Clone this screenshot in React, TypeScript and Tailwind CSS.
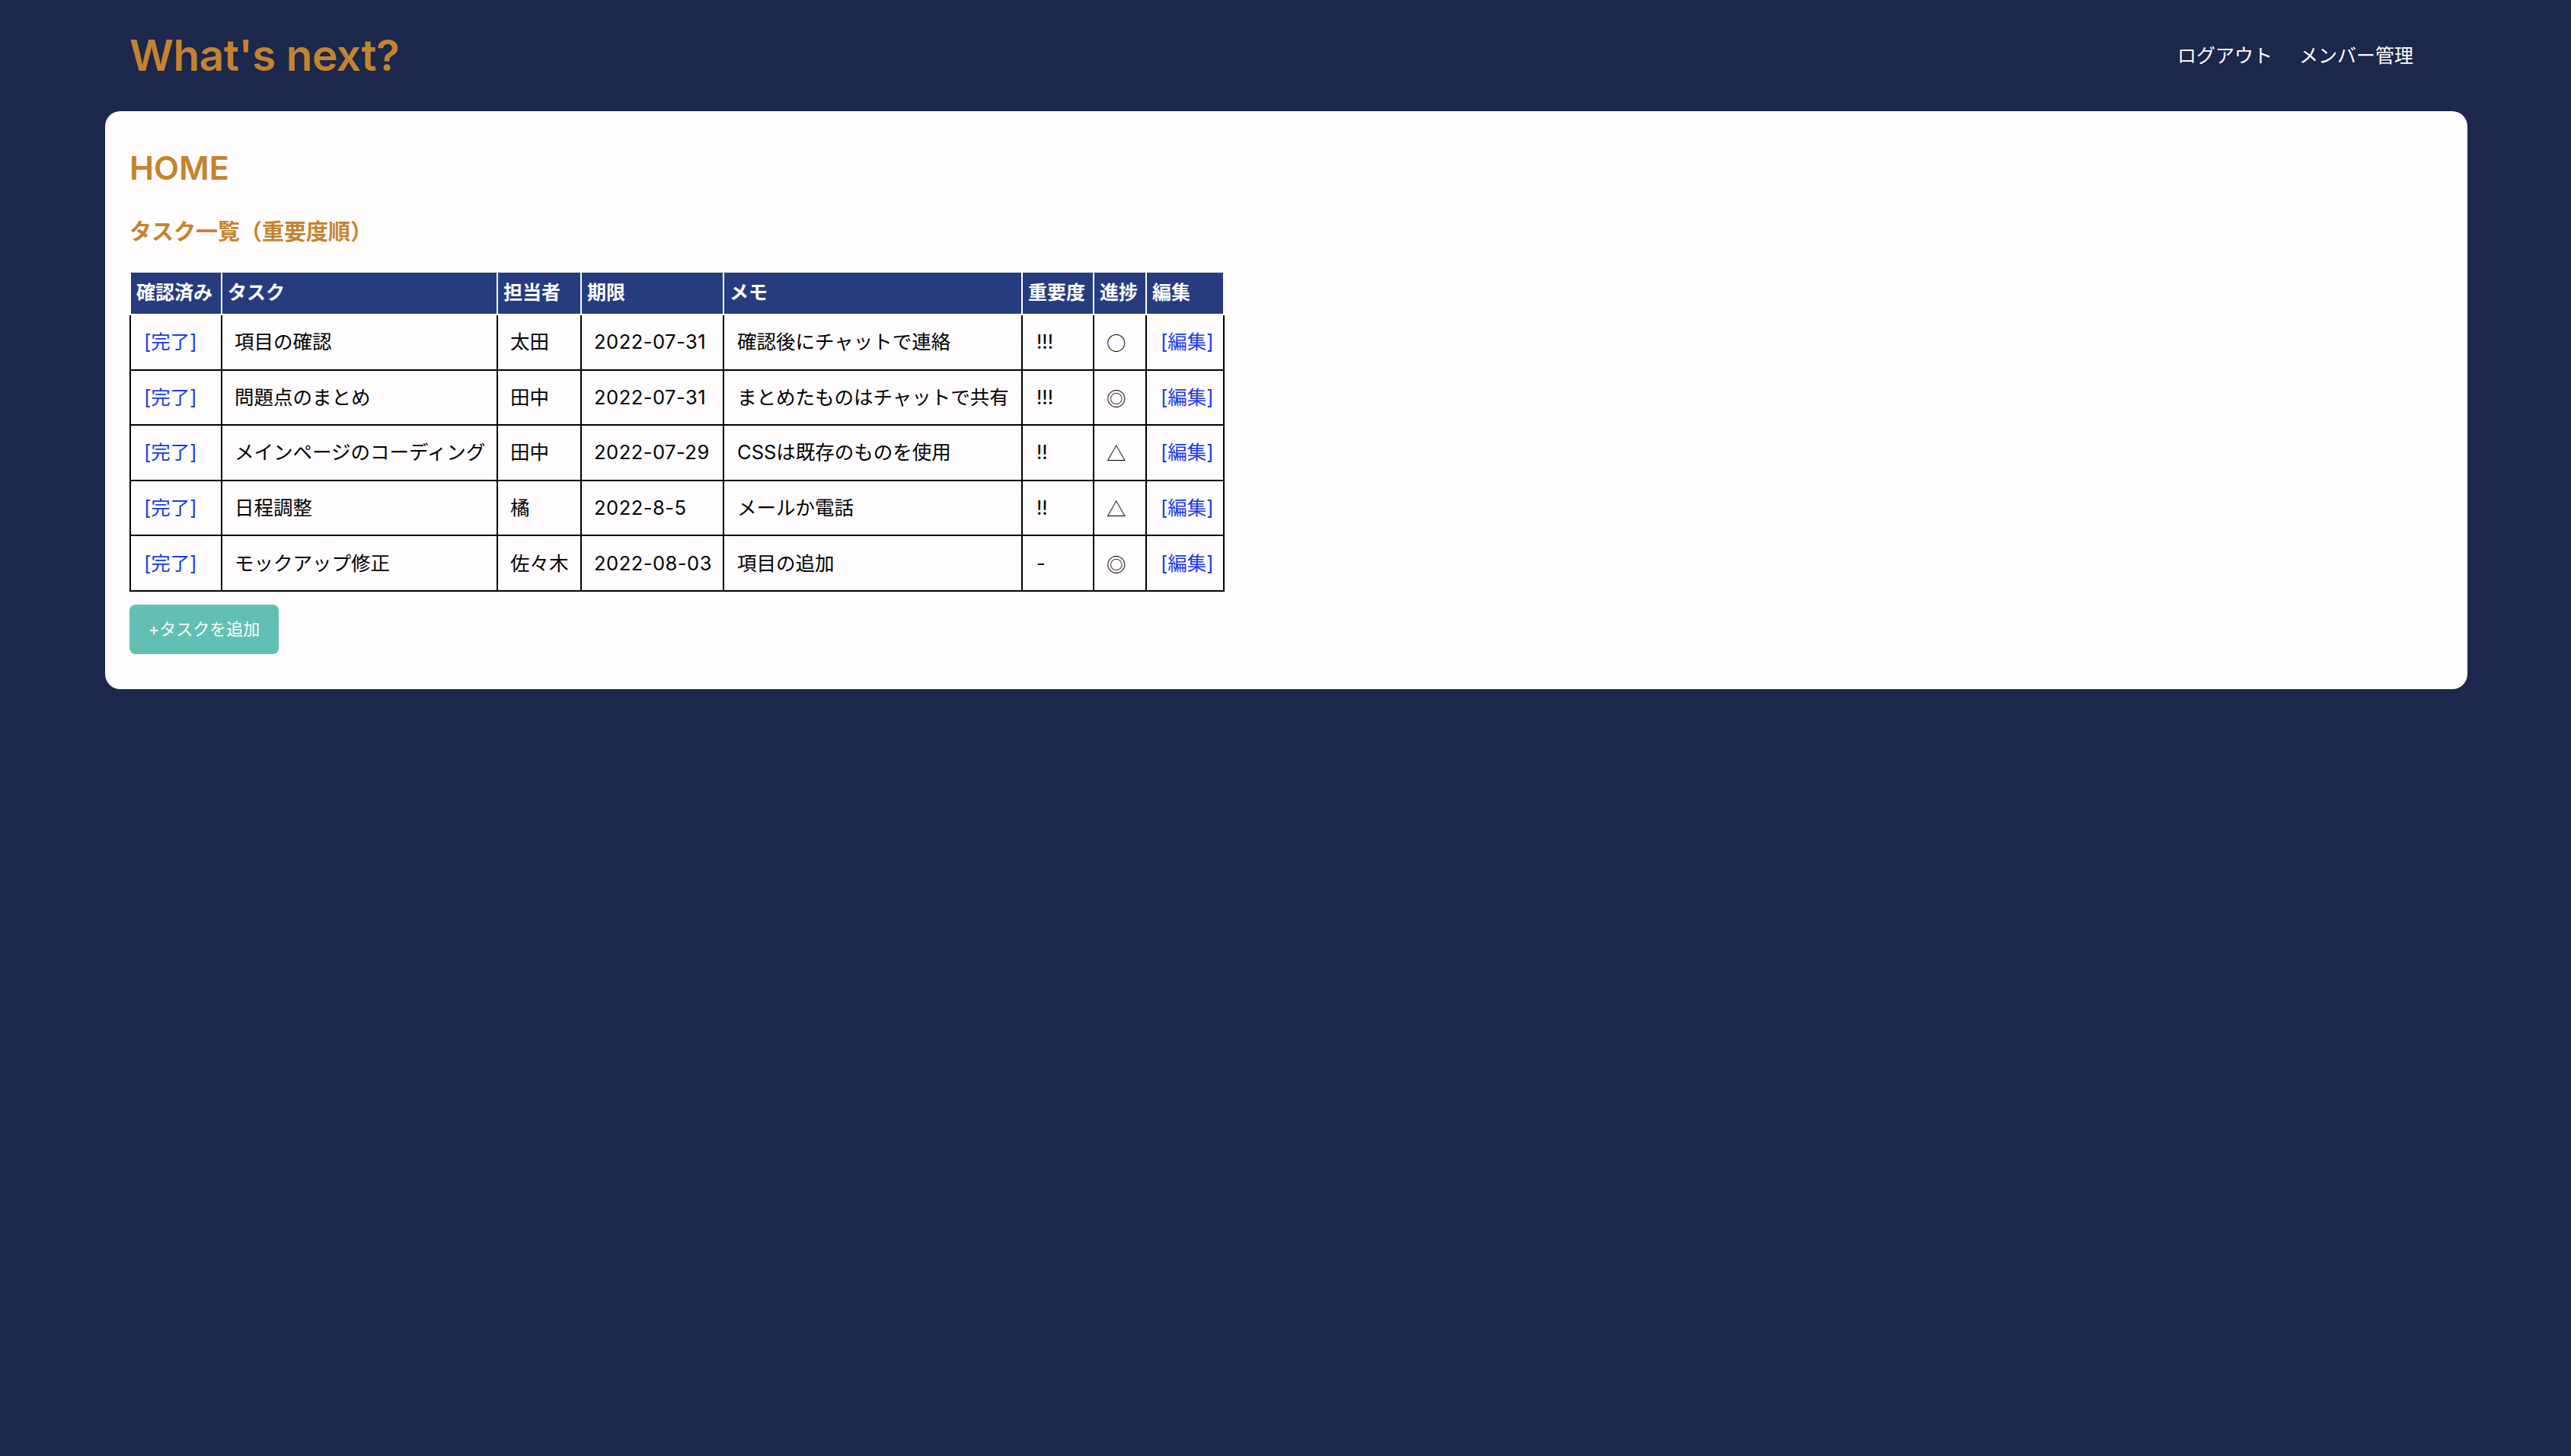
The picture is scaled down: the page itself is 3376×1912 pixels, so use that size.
import React from "react";

interface Task {
  id: number;
  title: string;
  owner: string;
  due: string;
  memo: string;
  priority: string;
  progress: string;
}

const tasks: Task[] = [
  { id: 1, title: "項目の確認", owner: "太田", due: "2022-07-31", memo: "確認後にチャットで連絡", priority: "!!!", progress: "○" },
  { id: 2, title: "問題点のまとめ", owner: "田中", due: "2022-07-31", memo: "まとめたものはチャットで共有", priority: "!!!", progress: "◎" },
  { id: 3, title: "メインページのコーディング", owner: "田中", due: "2022-07-29", memo: "CSSは既存のものを使用", priority: "!!", progress: "△" },
  { id: 4, title: "日程調整", owner: "橘", due: "2022-8-5", memo: "メールか電話", priority: "!!", progress: "△" },
  { id: 5, title: "モックアップ修正", owner: "佐々木", due: "2022-08-03", memo: "項目の追加", priority: "-", progress: "◎" },
];

const headers = ["確認済み", "タスク", "担当者", "期限", "メモ", "重要度", "進捗", "編集"];

export default function App() {
  return (
    <div className="min-h-screen bg-[#1b274b] font-[Inter,'Noto_Sans_CJK_JP',sans-serif]">
      {/* Header */}
      <header className="h-[146px] flex items-center justify-between pl-[170px] pr-[207px]">
        <h1 className="text-[57px] font-semibold text-[#c4832f] leading-none tracking-[-0.6px] -mt-[2px]">
          What's next?
        </h1>
        <nav className="flex items-center gap-[35px] text-[25px] text-white font-['Noto_Sans_CJK_JP',sans-serif] -mt-[2px]">
          <a href="#">ログアウト</a>
          <a href="#">メンバー管理</a>
        </nav>
      </header>

      {/* Main card */}
      <main className="ml-[138px] mr-[136px] bg-[#fefcfd] rounded-[20px] pt-[48px] pb-[46px] px-[32px]">
        <h2 className="text-[43px] leading-[52px] font-semibold text-[#c4832f]">HOME</h2>
        <h3 className="mt-[41px] text-[29px] leading-[35px] font-bold text-[#c4832f]">
          タスク一覧（重要度順）
        </h3>

        <table className="mt-[34px] table-fixed border-collapse w-[1436px] text-[25.5px] text-black">
          <colgroup>
            <col className="w-[120px]" />
            <col className="w-[362px]" />
            <col className="w-[110px]" />
            <col className="w-[187px]" />
            <col className="w-[392px]" />
            <col className="w-[94px]" />
            <col className="w-[69px]" />
            <col className="w-[102px]" />
          </colgroup>
          <thead>
            <tr className="h-[56px]">
              {headers.map((h) => (
                <th
                  key={h}
                  className="bg-[#263c7e] text-white text-[25px] font-bold text-left pl-[7px] border-2 border-white whitespace-nowrap"
                >
                  {h}
                </th>
              ))}
            </tr>
          </thead>
          <tbody>
            {tasks.map((t) => (
              <tr key={t.id} className="h-[72.6px]">
                <td className="border-2 border-black pl-[17px] whitespace-nowrap">
                  <a href="#" className="text-[#1a3be6]">[完了]</a>
                </td>
                <td className="border-2 border-black pl-[16px] whitespace-nowrap">{t.title}</td>
                <td className="border-2 border-black pl-[16px] whitespace-nowrap">{t.owner}</td>
                <td className="border-2 border-black pl-[16px] whitespace-nowrap tracking-[0.5px]">{t.due}</td>
                <td className="border-2 border-black pl-[17px] whitespace-nowrap">{t.memo}</td>
                <td className="border-2 border-black pl-[18px] whitespace-nowrap">{t.priority}</td>
                <td className="border-2 border-black pl-[16px] whitespace-nowrap font-['Noto_Sans_CJK_JP',sans-serif]">
                  {t.progress}
                </td>
                <td className="border-2 border-black pl-[18px] whitespace-nowrap">
                  <a href="#" className="text-[#1a3be6]">[編集]</a>
                </td>
              </tr>
            ))}
          </tbody>
        </table>

        <button className="mt-[17px] w-[196px] h-[65px] rounded-[8px] bg-[#62bfb3] text-white text-[22px] flex items-center justify-center">
          +タスクを追加
        </button>
      </main>
    </div>
  );
}
